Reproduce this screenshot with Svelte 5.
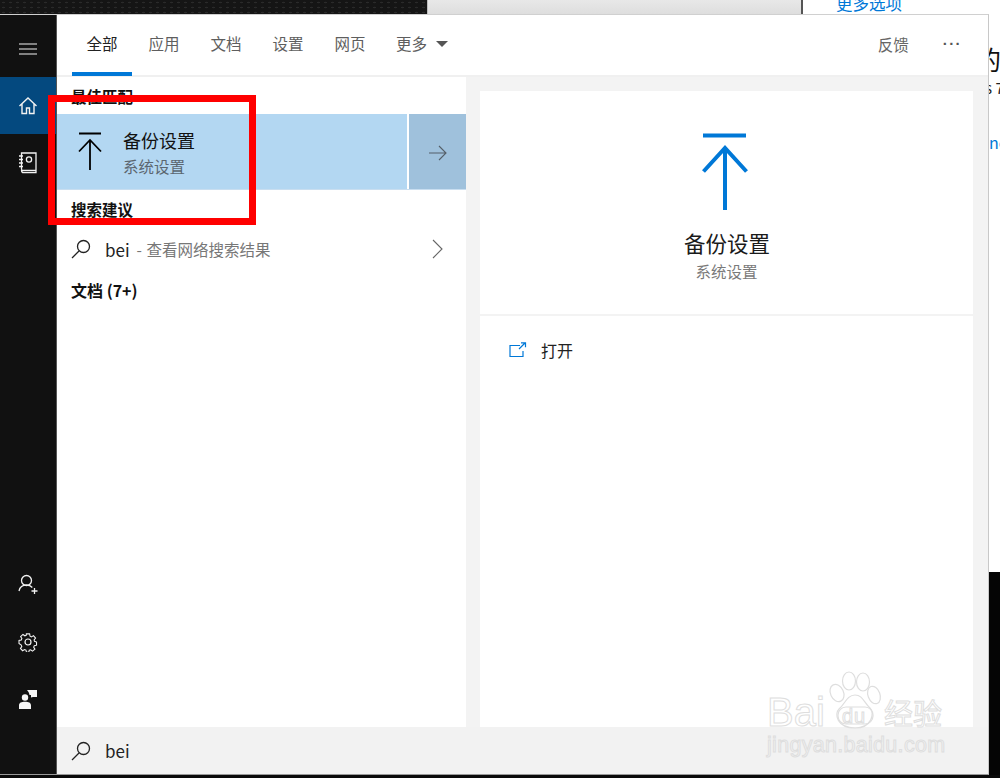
<script>
  const tabs = ['全部', '应用', '文档', '设置', '网页'];
  let active = $state('全部');
</script>

<div class="page">
  <div class="backdrop">
    <div class="desk"></div>
    <div class="dialog"><span class="dialog-label">备份设置</span></div>
    <div class="side-link">更多选项</div>
  </div>

  <div class="middle">
    <div class="window">
      <nav class="rail">
        <button class="rail-btn top" aria-label="菜单">
          <svg width="20" height="14" viewBox="0 0 20 14" fill="none" stroke="#f2f2f2" stroke-width="1.2"><path d="M1 2h18M1 7h18M1 12h18"/></svg>
        </button>
        <button class="rail-btn home" aria-label="主页">
          <svg width="20" height="20" viewBox="0 0 20 20" fill="none" stroke="#f2f2f2" stroke-width="1.4"><path d="M1.5 10 10 2l8.5 8M4 8v9.500h4.500V12h3v5.500H16V8"/></svg>
        </button>
        <button class="rail-btn" aria-label="笔记本">
          <svg width="20" height="22" viewBox="0 0 20 22" fill="none" stroke="#f2f2f2" stroke-width="1.300"><path d="M3.500 1h14.500v17.500H5a1.500 1.500 0 0 1-1.500-1.500zM3.500 18c0 2 .8 2.700 2 2.700H18v-2.200"/><circle cx="11" cy="7.500" r="2.600"/><path d="M1 4h4M1 7.500h4M1 11h4M1 14.500h4"/></svg>
        </button>
        <div class="rail-space"></div>
        <button class="rail-btn" aria-label="添加用户">
          <svg width="21" height="21" viewBox="0 0 21 21" fill="none" stroke="#f2f2f2" stroke-width="1.300"><circle cx="8.500" cy="6.500" r="5"/><path d="M1 17c.8-3.800 3.800-6 7.500-6 2.400 0 4.300.8 5.800 2.500M16.500 14v6M13.500 17h6"/></svg>
        </button>
        <button class="rail-btn" aria-label="设置">
          <svg width="20" height="20" viewBox="0 0 20 20" fill="none" stroke="#f2f2f2" stroke-width="1.200"><circle cx="10" cy="10" r="3"/><path d="M8.200 1h3.600l.5 2.600 1.500.7 2.300-1.400 2.300 2.700-1.600 2.100.4 1.500 2.300.9v3.400l-2.500.7-.7 1.500 1.400 2.200-2.700 2.300-2-1.500-1.600.5-.6 2.300H8.400l-.7-2.500-1.500-.6-2.200 1.300-2.400-2.600 1.500-2-.6-1.600L0 11.700V8.300l2.500-.6.700-1.500-1.400-2.200 2.600-2.400 2.100 1.500 1.500-.6z" transform="translate(1 1) scale(.9)"/></svg>
        </button>
        <button class="rail-btn" aria-label="反馈">
          <svg width="18" height="20" viewBox="0 0 18 20" fill="#f6f6f6"><circle cx="6" cy="8.500" r="3.200"/><path d="M0 20v-3.500C0 13.800 2.500 12.800 6 12.800s6 1 6 3.700V20zM8 1h10v7h-4l-2 .5V6h-1.500C10 4 9.500 2.500 8 1z"/></svg>
        </button>
      </nav>

      <div class="content">
        <header class="tabs">
          {#each tabs as t}
            <button class="tab" class:active={active === t} onclick={() => (active = t)}>{t}</button>
          {/each}
          <button class="tab more">更多<span class="caret"></span></button>
          <span class="tabs-space"></span>
          <button class="feedback">反馈</button>
          <span class="dots">···</span>
        </header>

        <div class="panes">
          <section class="results">
            <h4 class="first">最佳匹配</h4>
            <div class="best">
              <div class="best-main">
                <svg class="best-icon" width="24" height="38" viewBox="0 0 24 38" fill="none" stroke="#000" stroke-width="1.800"><path d="M1 1.500h22M12 38V8M1 19.500 12 8l11 11.500"/></svg>
                <div class="best-text">
                  <div class="best-title">备份设置</div>
                  <div class="best-sub">系统设置</div>
                </div>
              </div>
              <div class="best-arrow">
                <svg width="18" height="16" viewBox="0 0 18 16" fill="none" stroke="#555f68" stroke-width="1.100"><path d="M0 8h17M10 1l7 7-7 7"/></svg>
              </div>
            </div>
            <h4>搜索建议</h4>
            <div class="suggest">
              <svg class="glass" width="20" height="20" viewBox="0 0 20 20" fill="none" stroke="#222" stroke-width="1.300"><circle cx="12.500" cy="7.500" r="6"/><path d="M8 12 1 19"/></svg>
              <span class="term">bei</span>
              <span class="hint">- 查看网络搜索结果</span>
              <svg class="chev" width="11" height="20" viewBox="0 0 11 20" fill="none" stroke="#666" stroke-width="1.100"><path d="M1 1l9 9-9 9"/></svg>
            </div>
            <h4 class="docs">文档 (7+)</h4>
          </section>

          <section class="detail">
            <div class="card hero">
              <svg class="hero-icon" width="46" height="77" viewBox="0 0 46 77" fill="none" stroke="#0078d7" stroke-width="4"><path d="M1 2.500h43M23 77V15M1.500 38.500 23 15l21.500 23.500"/></svg>
              <div class="hero-title">备份设置</div>
              <div class="hero-sub">系统设置</div>
            </div>
            <div class="card actions">
              <div class="action">
                <svg width="18" height="16" viewBox="0 0 18 16" fill="none" stroke="#0078d7" stroke-width="1.200"><path d="M11 3.500H1v11h13V9M10 7l6-6M12 .8h4.500v4.400"/></svg>
                <span>打开</span>
              </div>
            </div>
          </section>
        </div>

        <div class="searchbar">
          <svg class="glass" width="20" height="20" viewBox="0 0 20 20" fill="none" stroke="#222" stroke-width="1.300"><circle cx="12.500" cy="7.500" r="6"/><path d="M8 12 1 19"/></svg>
          <span class="term">bei</span>
        </div>
      </div>
    </div>

    <aside class="behind">
      <div class="behind-page">
        <div class="big">的</div>
        <div class="small">s 7</div>
        <div class="blue">ne</div>
      </div>
      <div class="behind-dark"></div>
    </aside>
  </div>

  <div class="bottom"></div>

  <!-- red marker drawn over the screenshot -->
  <div class="marker"></div>

  <!-- watermark -->
  <div class="mark">
    <div class="mark-row">
      <span class="mark-bai">Bai</span>
      <svg class="paw" width="56" height="58" viewBox="0 0 56 58" fill="none" stroke="#dedede" stroke-width="1.200">
        <ellipse cx="10" cy="22" rx="6.500" ry="9" transform="rotate(-25 10 22)"/>
        <ellipse cx="22" cy="10" rx="6.500" ry="9"/>
        <ellipse cx="36" cy="11" rx="6.500" ry="9"/>
        <ellipse cx="47" cy="24" rx="6" ry="9" transform="rotate(-20 47 24)"/>
        <path d="M28 24c8 0 9 8 15 13 5 5 2 20-15 20C10 57 7 43 12 38c6-5 8-14 16-14z"/>
        <rect x="11" y="36" width="35" height="17" rx="8"/>
      </svg>
      <span class="mark-du">du</span>
      <span class="mark-cn">经验</span>
    </div>
    <div class="mark-url">jingyan.baidu.com</div>
  </div>
</div>

<style>
  :global(body) {
    margin: 0;
    background: #000;
  }
  .page {
    position: relative;
    width: 1000px;
    height: 778px;
    overflow: hidden;
    display: flex;
    flex-direction: column;
    font-family: "Noto Sans CJK SC", "Noto Sans", sans-serif;
  }
  button {
    font-family: inherit;
    border: 0;
    background: none;
    padding: 0;
  }
  .backdrop {
    height: 14px;
    display: flex;
    flex: none;
    background: #fff;
    overflow: hidden;
  }
  .desk {
    width: 427px;
    background-color: #151515;
    background-image: radial-gradient(#2a2a2a 1px, transparent 1.500px);
    background-size: 7px 5px;
  }
  .dialog {
    width: 376px;
    background: linear-gradient(#e8e8e8, #dedede);
    border-right: 2px solid #555;
    border-left: 1px solid #bbb;
    box-sizing: border-box;
    padding-left: 50px;
    font-size: 15px;
    line-height: 20px;
    color: #444;
  }
  .dialog-label {
    display: block;
    margin-top: 11px;
  }
  .side-link {
    margin-left: 33px;
    margin-top: -7px;
    font-size: 16.500px;
    line-height: 20px;
    color: #0078d7;
  }
  .middle {
    display: flex;
    height: 761px;
    flex: none;
  }
  .window {
    width: 989px;
    display: flex;
    flex: none;
    background: #fff;
    border-top: 1px solid #d0d0d0;
    border-right: 1px solid #c8c8c8;
    border-bottom: 1px solid #999;
    box-sizing: border-box;
  }
  .rail {
    width: 57px;
    flex: none;
    background: #111;
    border-right: 1px solid #555;
    box-sizing: border-box;
    display: flex;
    flex-direction: column;
    padding-bottom: 47px;
  }
  .rail-btn {
    height: 57px;
    display: flex;
    align-items: center;
    justify-content: center;
    flex: none;
  }
  .rail-btn.top {
    height: 62px;
    padding-top: 5px;
    box-sizing: border-box;
  }
  .rail-btn.home {
    background: #04497f;
  }
  .rail-space {
    flex: 1;
  }
  .content {
    flex: 1;
    min-width: 0;
    display: flex;
    flex-direction: column;
  }
  .tabs {
    height: 62px;
    flex: none;
    display: flex;
    align-items: stretch;
    padding-left: 15px;
    border-bottom: 2px solid #f0f0f0;
    box-sizing: border-box;
  }
  .tab {
    width: 62px;
    padding-bottom: 2px;
    font-size: 15.500px;
    color: #5e5e5e;
    border-bottom: 4px solid transparent;
    box-sizing: border-box;
    margin-bottom: -1px;
  }
  .tab.active {
    width: 60px;
    margin-right: 1px;
    color: #222;
    border-bottom-color: #0078d7;
  }
  .tab.more {
    width: auto;
    margin-left: 15px;
    display: flex;
    align-items: center;
  }
  .caret {
    margin-left: 9px;
    margin-top: 3px;
    border-left: 6px solid transparent;
    border-right: 6px solid transparent;
    border-top: 6px solid #555;
  }
  .tabs-space {
    flex: 1;
  }
  .feedback {
    font-size: 15.500px;
    color: #666;
    padding-bottom: 3px;
  }
  .dots {
    margin-left: 34px;
    margin-right: 26px;
    font-family: "Liberation Sans", sans-serif;
    font-size: 15px;
    font-weight: 700;
    letter-spacing: 1.400px;
    line-height: 20px;
    color: #555;
    align-self: center;
    margin-top: -2px;
  }
  .panes {
    flex: 1;
    min-height: 0;
    display: flex;
  }
  .results {
    width: 409px;
    flex: none;
  }
  h4 {
    margin: 0;
    padding: 9px 14px 0;
    height: 31px;
    box-sizing: border-box;
    font-size: 15.500px;
    line-height: 20px;
    font-weight: 700;
    color: #111;
  }
  h4.first {
    height: 37px;
  }
  h4.docs {
    padding-top: 9px;
    font-size: 16px;
  }
  .best {
    height: 76px;
    display: flex;
    gap: 2px;
    border-bottom: 1px solid #c9def0;
    box-sizing: border-box;
  }
  .best-main {
    flex: 1;
    display: flex;
    align-items: center;
    background: #b3d7f2;
    color: #111;
  }
  .best-icon {
    margin-left: 21px;
    margin-right: 21px;
    margin-top: -2px;
  }
  .best-text {
    padding-top: 3px;
  }
  .best-title {
    font-size: 18px;
    line-height: 26px;
  }
  .best-sub {
    font-size: 15.500px;
    line-height: 26px;
    color: #5b6670;
  }
  .best-arrow {
    width: 57px;
    flex: none;
    display: flex;
    align-items: center;
    justify-content: center;
    background: #9fc1dc;
    padding-top: 2px;
    box-sizing: border-box;
  }
  .suggest {
    height: 50px;
    display: flex;
    align-items: center;
    padding: 6px 0 0 14px;
    box-sizing: border-box;
    font-size: 15px;
  }
  .glass {
    flex: none;
  }
  .term {
    margin-left: 14px;
    font-size: 17px;
    color: #222;
  }
  .hint {
    margin-left: 7px;
    font-size: 15.500px;
    word-spacing: 1px;
    color: #777;
  }
  .chev {
    margin-left: auto;
    margin-right: 23px;
  }
  .detail {
    flex: 1;
    background: #f3f3f3;
    padding: 14px 15px 0 14px;
    display: flex;
    flex-direction: column;
    gap: 2px;
  }
  .card {
    background: #fff;
  }
  .hero {
    height: 223px;
    flex: none;
    display: flex;
    flex-direction: column;
    align-items: center;
    box-sizing: border-box;
    padding-top: 42px;
  }
  .hero-icon {
    flex: none;
    margin-left: -3px;
  }
  .hero-title {
    margin-top: 18px;
    font-size: 21.500px;
    line-height: 30px;
    color: #1a1a1a;
    margin-left: 1px;
  }
  .hero-sub {
    font-size: 15.500px;
    line-height: 25px;
    margin-top: 1px;
    color: #7a7a7a;
  }
  .actions {
    flex: 1;
  }
  .action {
    display: flex;
    align-items: center;
    gap: 14px;
    padding: 23px 0 0 29px;
    font-size: 16px;
    line-height: 22px;
    color: #222;
  }
  .searchbar {
    height: 47px;
    flex: none;
    display: flex;
    align-items: center;
    padding-left: 14px;
    background: #f2f2f2;
  }
  .behind {
    flex: 1;
    display: flex;
    flex-direction: column;
    overflow: hidden;
  }
  .behind-page {
    height: 558px;
    background: #fff;
    padding-top: 27px;
    box-sizing: border-box;
    overflow: hidden;
  }
  .big {
    margin-left: -14px;
    font-size: 26px;
    line-height: 36px;
    color: #111;
  }
  .small {
    margin-left: -4px;
    font-size: 15px;
    line-height: 20px;
    margin-top: 1px;
    color: #222;
    white-space: nowrap;
  }
  .blue {
    margin-top: 33px;
    font-size: 16px;
    line-height: 22px;
    color: #0078d7;
  }
  .behind-dark {
    flex: 1;
    background: #050505;
  }
  .bottom {
    flex: 1;
    background: #0a0a0a;
  }
  .marker {
    position: absolute;
    left: 48px;
    top: 95px;
    width: 208px;
    height: 130px;
    border: 7px solid #f00;
    box-sizing: border-box;
  }
  .mark {
    position: absolute;
    left: 767px;
    top: 670px;
    width: 190px;
    color: transparent;
    font-family: "Liberation Sans", sans-serif;
    -webkit-text-stroke: 1px #dedede;
  }
  .mark-row {
    position: relative;
    height: 58px;
  }
  .mark-bai {
    position: absolute;
    left: 0;
    top: 23px;
    font-size: 40px;
    line-height: 38px;
  }
  .paw {
    position: absolute;
    left: 60px;
    top: 1px;
  }
  .mark-du {
    position: absolute;
    left: 75px;
    top: 36px;
    font-size: 20px;
    line-height: 20px;
    letter-spacing: 1px;
  }
  .mark-cn {
    position: absolute;
    left: 117px;
    top: 25px;
    font-size: 29px;
    line-height: 34px;
    font-family: "Noto Sans CJK SC", sans-serif;
  }
  .mark-url {
    font-size: 21.500px;
    line-height: 24px;
    letter-spacing: 0.300px;
    margin-top: 5px;
    white-space: nowrap;
  }
</style>
